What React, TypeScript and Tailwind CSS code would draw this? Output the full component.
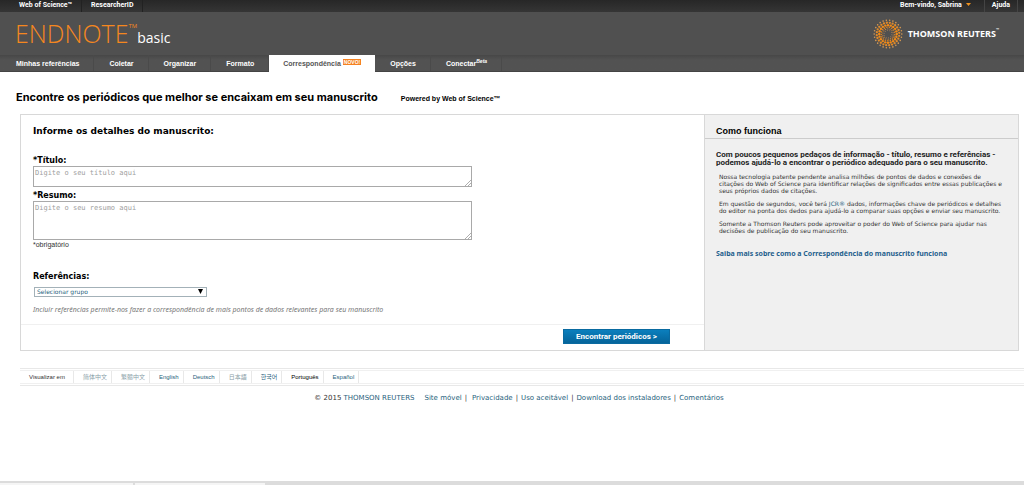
import type { ReactNode } from "react";

const arial = "font-['Liberation_Sans',Arial,sans-serif]";
const roboto = "font-['Roboto','Liberation_Sans',sans-serif]";
const noto = "font-['Noto_Sans','Open_Sans',sans-serif]";
const humanist = "font-['Open_Sans','Noto_Sans',sans-serif]";

const rings = [
  { r: 13.8, n: 26, size: 0.8, tone: "#d99a52" },
  { r: 11.3, n: 24, size: 1.15, tone: "#e08a2a" },
  { r: 8.8, n: 20, size: 1.2, tone: "#f08a17" },
  { r: 6.8, n: 17, size: 0.8, tone: "#e08420" },
  { r: 5.2, n: 14, size: 0.6, tone: "#c98640" },
  { r: 3.8, n: 10, size: 0.5, tone: "#a88058" },
];

function DotSpiral() {
  return (
    <svg viewBox="-15 -15 30 30" className="size-[30px]" aria-hidden="true">
      {rings.flatMap((ring, k) =>
        Array.from({ length: ring.n }, (_, i) => {
          const a = (i / ring.n) * Math.PI * 2 + k * 0.16;
          return (
            <circle key={`${k}-${i}`} cx={Math.cos(a) * ring.r} cy={Math.sin(a) * ring.r} r={ring.size} fill={ring.tone} />
          );
        }),
      )}
    </svg>
  );
}

function Tab({ children }: { children: ReactNode }) {
  return (
    <a href="#" className="flex items-center border-r border-[#4a4a4a] pt-[2px] pr-[14px] pl-[15px]">
      <span>{children}</span>
    </a>
  );
}

function Field({ id, label, placeholder, box }: { id: string; label: string; placeholder: string; box: string }) {
  return (
    <div className="flex flex-col">
      <label htmlFor={id} className="pt-px text-[8px] leading-[10px] font-bold text-black">
        {label}
      </label>
      <div className="relative flex">
        <textarea
          id={id}
          placeholder={placeholder}
          className={`${box} w-full resize-none border border-[#a9a9a9] bg-white px-px py-[2px] font-['DejaVu_Sans_Mono',monospace] text-[7px] leading-[8px] placeholder:text-[#a0a0a0]`}
        />
        <svg viewBox="0 0 6 6" className="absolute right-px bottom-px size-[6px]" stroke="#999" strokeWidth="0.8" aria-hidden="true">
          <path d="M0 6L6 0M3 6L6 3" />
        </svg>
      </div>
    </div>
  );
}

const languages = [
  { name: "简体中文", tone: "text-[#8aa0a8]" },
  { name: "繁體中文", tone: "text-[#8aa0a8]" },
  { name: "English", tone: "text-[#1f5f7d]" },
  { name: "Deutsch", tone: "text-[#1f5f7d]" },
  { name: "日本語", tone: "text-[#8aa0a8]" },
  { name: "한국어", tone: "text-[#1f5f7d]" },
  { name: "Português", tone: "text-black" },
  { name: "Español", tone: "text-[#1f5f7d]" },
];

export default function App() {
  return (
    <div className="flex min-h-screen flex-col bg-white font-['DejaVu_Sans',Verdana,sans-serif] text-[#333]">
      <div className={`${roboto} flex h-3 justify-between bg-linear-to-b from-[#272727] to-[#353535] text-[7px] leading-[10px] font-bold text-white`}>
        <nav className="flex pl-[10px]">
          <a href="#" className="border-r border-[#222] px-[9px]">Web of Science™</a>
          <a href="#" className="border-r border-[#222] px-[9px]">ResearcherID</a>
        </nav>
        <nav className="flex pr-[6px]">
          <a href="#" className="flex gap-1 border-r border-[#444] pr-[13px]">
            Bem-vindo, Sabrina
            <svg viewBox="0 0 5 3" className="mt-[3px] h-[3px] w-[5px]" fill="#f0921e" aria-hidden="true">
              <path d="M0 0H5L2.5 3Z" />
            </svg>
          </a>
          <a href="#" className="border-r border-[#444] px-[7px]">Ajuda</a>
        </nav>
      </div>

      <header className="flex h-[43px] items-center justify-between bg-[#505050] pr-[25px] pl-[15px]">
        <a href="#" className={`${humanist} flex items-baseline text-white`}>
          <span className="text-[25px] leading-[41px] font-light text-[#f5871f]">ENDNOTE</span>
          <span className="self-start pt-[9px] text-[6px] leading-[8px] text-[#f5871f]">TM</span>
          <span className="text-[14px]">basic</span>
        </a>
        <a href="#" className={`${noto} flex items-center gap-[5px] text-[9px] font-bold text-white`}>
          <DotSpiral />
          <span>THOMSON REUTERS<span className="align-top text-[4px]">™</span></span>
        </a>
      </header>

      <nav className={`${arial} flex h-[17px] border-b border-[#444] bg-linear-to-b from-[#474747] to-[#525252] to-30% pl-px text-[7px] font-bold text-white`}>
        <Tab>Minhas referências</Tab>
        <Tab>Coletar</Tab>
        <Tab>Organizar</Tab>
        <Tab>Formato</Tab>
        <a href="#" className="-mb-px flex items-center gap-[2px] bg-white px-[14px] pt-px text-[#555]">
          <span>Correspondência</span>
          <span className="mb-1 bg-[#f58220] px-px text-[5px] leading-[6px] text-white">NOVO!</span>
        </a>
        <Tab>Opções</Tab>
        <Tab>
          Conectar<sup className="text-[5px] italic">Beta</sup>
        </Tab>
      </nav>

      <main>
        <div className={`${arial} flex items-baseline gap-[23px] px-4 pt-[17px] pb-2 font-bold text-black`}>
          <h1 className="font-['Inter','Liberation_Sans',sans-serif] text-[11px] leading-[17px]">Encontre os periódicos que melhor se encaixam em seu manuscrito</h1>
          <span className="text-[7px]">Powered by Web of Science™</span>
        </div>

        <div className="mr-[5px] ml-5 flex border border-[#d8d8d8]">
          <form className="min-w-0 flex-1" onSubmit={(e) => e.preventDefault()}>
            <div className="flex flex-col pt-2 pb-2 pl-3">
              <h2 className="text-[9px] leading-4 font-bold text-black">Informe os detalhes do manuscrito:</h2>
              <div className="flex w-[439px] flex-col gap-[3px] pt-4">
                <Field id="titulo" label="*Título:" placeholder="Digite o seu título aqui" box="h-[21px]" />
                <Field id="resumo" label="*Resumo:" placeholder="Digite o seu resumo aqui" box="h-[39px]" />
              </div>
              <p className={`${arial} text-[7px] leading-[10px]`}>*obrigatório</p>
              <label htmlFor="grupo" className="pt-[22px] text-[8px] leading-[10px] font-bold text-black">Referências:</label>
              <div className="relative mt-[5px] ml-px flex w-[173px]">
                <select id="grupo" className="h-[10px] w-full appearance-none border border-[#a3b1b8] bg-white px-[2px] text-[6px] leading-[8px] text-[#1f5f7d]">
                  <option>Selecionar grupo</option>
                </select>
                <svg viewBox="0 0 5 5" className="pointer-events-none absolute top-[2px] right-[4px] size-[5px]" aria-hidden="true">
                  <path d="M0 0H5L2.5 5Z" />
                </svg>
              </div>
              <p className={`${noto} pt-[8px] pb-px text-[7px] leading-[10px] text-[#777] italic`}>
                Incluir referências permite-nos fazer a correspondência de mais pontos de dados relevantes para seu manuscrito
              </p>
            </div>
            <div className="flex justify-end border-t border-[#f0f0f0] pt-1 pr-[34px] pb-[6px]">
              <button className={`${roboto} h-[15px] w-[107px] border border-[#0a6aa0] bg-linear-to-b from-[#0b7fbd] to-[#05649a] text-[8px] leading-[12px] font-bold text-white`}>
                Encontrar periódicos &gt;
              </button>
            </div>
          </form>

          <aside className="w-[314px] border-l border-[#d8d8d8] bg-[#f0f0f0]">
            <h2 className={`${arial} border-b border-[#ccc] pt-[9px] pl-[11px] text-[9px] leading-[14px] font-bold text-black`}>Como funciona</h2>
            <div className="pt-3 pl-[11px]">
              <p className={`${roboto} text-[8px] leading-[8px] font-bold whitespace-nowrap text-[#222]`}>
                Com poucos pequenos pedaços de informação - título, resumo e referências -<br />
                podemos ajudá-lo a encontrar o periódico adequado para o seu manuscrito.
              </p>
              <div className="flex flex-col gap-[6px] pt-[6px] pl-[3px] text-[6px] leading-[7px] whitespace-nowrap">
                <p>
                  Nossa tecnologia patente pendente analisa milhões de pontos de dados e conexões de<br />
                  citações do Web of Science para identificar relações de significados entre essas publicações e<br />
                  seus próprios dados de citações.
                </p>
                <p>
                  Em questão de segundos, você terá <a href="#" className="text-[#1f5f7d]">JCR®</a> dados, informações chave de periódicos e detalhes<br />
                  do editor na ponta dos dedos para ajudá-lo a comparar suas opções e enviar seu manuscrito.
                </p>
                <p>
                  Somente a Thomson Reuters pode aproveitar o poder do Web of Science para ajudar nas<br />
                  decisões de publicação do seu manuscrito.
                </p>
              </div>
              <a href="#" className={`${noto} block pt-[15px] text-[7px] leading-[10px] font-bold text-[#1f5f8d]`}>
                Saiba mais sobre como a Correspondência do manuscrito funciona
              </a>
            </div>
          </aside>
        </div>
      </main>

      <footer>
        <div className="mt-[17px] ml-5 border-y border-[#e8e8e8] py-px">
          <nav className="flex border-y border-[#f0f0f0] pl-[9px] font-['Liberation_Sans','Noto_Sans_CJK_SC','Noto_Sans_CJK_KR',sans-serif] text-[6px] leading-[12px]">
            <span className="border-r border-[#e8e8e8] pr-2">Visualizar em</span>
            {languages.map((l) => (
              <a key={l.name} href="#" className={`border-r border-[#e8e8e8] pr-1 pl-[9px] ${l.tone}`}>{l.name}</a>
            ))}
          </nav>
        </div>
        <p className="flex justify-center gap-[3px] pt-[7px] pl-[14px] text-[7px] leading-[10px] text-[#333]">
          <span>© 2015 <a href="#" className="text-[#1f5f7d]">THOMSON REUTERS</a></span>
          <a href="#" className="pl-[7px] text-[#1f5f7d]">Site móvel</a>|
          <a href="#" className="pl-[2px] text-[#1f5f7d]">Privacidade</a>|
          <a href="#" className="text-[#1f5f7d]">Uso aceitável</a>|
          <a href="#" className="text-[#1f5f7d]">Download dos instaladores</a>|
          <a href="#" className="text-[#1f5f7d]">Comentários</a>
        </p>
      </footer>

      <div className="mt-auto flex h-1 items-end gap-[2px] bg-[#dcdcdc]">
        <div className="h-[2px] w-[133px] bg-[#f5f5f5]" />
        <div className="h-[2px] w-[130px] bg-[#f5f5f5]" />
      </div>
    </div>
  );
}
